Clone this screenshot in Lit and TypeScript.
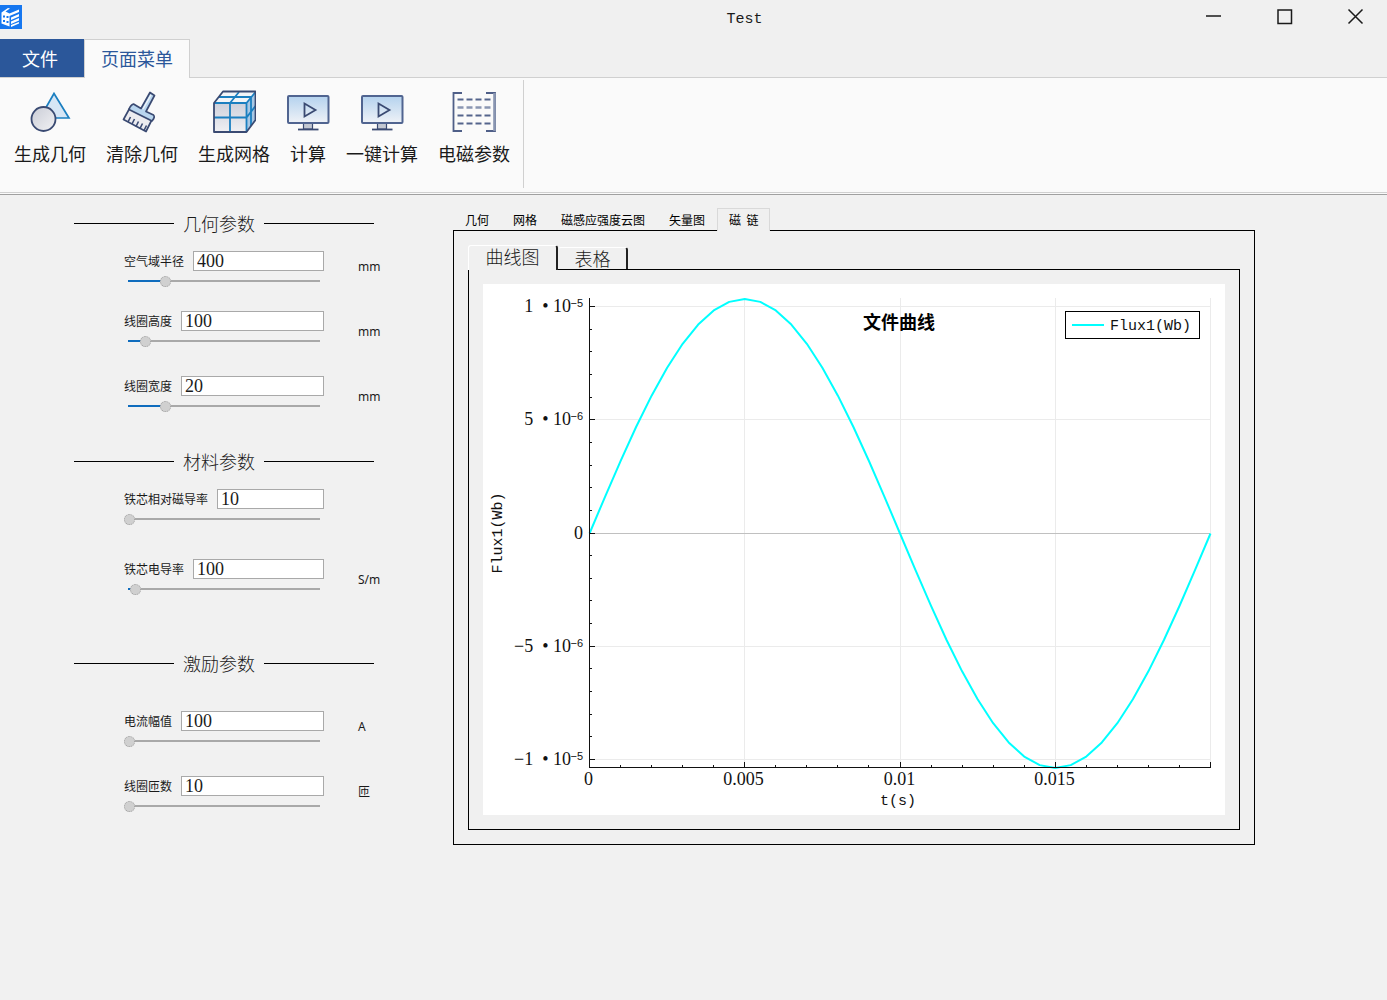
import { LitElement, html, svg, css, nothing } from "lit";
import { customElement, property, state } from "lit/decorators.js";

const NAVY = "#3a4a72";
const BLUE = "#1b7fc0";

const icons: Record<string, unknown> = {
  shapes: svg`
    <defs><linearGradient id="sg" x1="0" y1="0" x2="1" y2="1"><stop offset="0" stop-color="#c9ccd6"/><stop offset="1" stop-color="#f2f2f4"/></linearGradient></defs>
    <path d="M26 3.500 41 28H12Z" fill="#d6e6f5" stroke="${BLUE}" stroke-width="1.7"/>
    <circle cx="15.5" cy="29" r="12" fill="url(#sg)" stroke="${NAVY}" stroke-width="1.8"/>`,
  brush: svg`
    <path d="M9.500 18.500 3.500 29.500 26 41.500 32.500 28.500Z" fill="#ececf0" stroke="${NAVY}" stroke-width="1.7" stroke-linejoin="round"/>
    <path d="M8 32 10.500 27M12 34 14.500 29M16 36.500 18.500 31.500M20 38.500 22.500 33.500M24 40.500 26.500 35.500" stroke="${NAVY}" stroke-width="1.600"/>
    <path d="M13.500 14 Q10.500 15 9 19.500L32 31Q35.500 27 33.500 25L26 21.500 34.500 5.500 30 2.500 21 18.500Z" fill="#b9d6ef" stroke="${NAVY}" stroke-width="1.700" stroke-linejoin="round"/>
    <path d="M31 5 23 19" stroke="#eef3f8" stroke-width="1.500"/>`,
  cube: svg`
    <defs><linearGradient id="cg" x1="0" y1="0" x2="0" y2="1"><stop offset="0" stop-color="#cdd0db"/><stop offset="1" stop-color="#f0f0f3"/></linearGradient></defs>
    <path d="M2 13 11 1.500H43.500L34.500 13Z" fill="#f3f5f8"/>
    <path d="M34.500 13 43.500 1.500V30L34.500 42Z" fill="#a9c8e4"/>
    <path d="M2 13H34.500V42H2Z" fill="url(#cg)"/>
    <path d="M2 13H34.500V42M18 42V13L27 2M2 27.500H34.500L43.500 16M7 7H39V36M34.500 13 43.500 2" fill="none" stroke="${BLUE}" stroke-width="1.800"/>
    <path d="M2 13 11 1.500H43.500V30L34.500 42H2Z" fill="none" stroke="${NAVY}" stroke-width="1.800" stroke-linejoin="round"/>`,
  run: svg`
    <defs><linearGradient id="rg" x1="0" y1="0" x2="0" y2="1"><stop offset="0" stop-color="#b4d2ee"/><stop offset="1" stop-color="#eff2f7"/></linearGradient></defs>
    <path d="M17.500 33H26.500V39H17.500Z" fill="#c3c8d2" stroke="${NAVY}" stroke-width="1.200"/>
    <rect x="2" y="6" width="40.500" height="27" rx="1" fill="url(#rg)" stroke="#506490" stroke-width="2"/>
    <path d="M18.500 13.500V26.500L29.500 20Z" fill="none" stroke="${NAVY}" stroke-width="1.800"/>
    <path d="M12 39.500H32.500" stroke="${NAVY}" stroke-width="1.800"/>`,
  matrix: svg`
    <path d="M10 3H1.500V41H10" fill="none" stroke="#4f5f88" stroke-width="1.800"/>
    <path d="M34 3H43V41H34" fill="none" stroke="#4f5f88" stroke-width="1.800"/>
    <path d="M42.500 3V41" stroke="#8a96b2" stroke-width="2.600"/>
    <path d="M5.500 9.500H39M5.500 25.500H39M5.500 33.500H39" stroke="#54648c" stroke-width="1.800" stroke-dasharray="6 3"/>
    <path d="M5.500 17.500H39" stroke="#8a96b2" stroke-width="2.400" stroke-dasharray="6 3"/>`,
};

const ribbon = [
  ["生成几何", "shapes"],
  ["清除几何", "brush"],
  ["生成网格", "cube"],
  ["计算", "run"],
  ["一键计算", "run"],
  ["电磁参数", "matrix"],
];

@customElement("ribbon-button")
class RibbonButton extends LitElement {
  @property() label = "";
  @property() icon = "";
  static styles = css`
    :host { display: block; }
    button {
      display: flex; flex-direction: column; align-items: center; gap: 6px;
      border: 0; padding: 0; background: none; color: #1a1a1a;
      font: 18px/26px "Noto Sans CJK SC", sans-serif; white-space: nowrap;
    }
    svg { width: 44px; height: 44px; display: block; margin: 0 -4px; }
  `;
  render() {
    return html`<button type="button">
      <svg viewBox="0 0 44 44" aria-hidden="true">${icons[this.icon]}</svg>
      <span>${this.label}</span>
    </button>`;
  }
}

@customElement("param-field")
class ParamField extends LitElement {
  @property() label = "";
  @property() value = "";
  @property({ type: Number }) level = 0;
  static styles = css`
    :host { display: block; }
    .row { display: flex; align-items: center; gap: 9px; height: 20px; }
    label { font: 12px/20px "Noto Sans CJK SC", sans-serif; color: #1a1a1a; white-space: nowrap; }
    .text {
      flex: 1; min-width: 0; height: 20px; box-sizing: border-box; padding: 1px 3px 0;
      border: 1px solid #a9a9a9; background: #fff; border-radius: 0; outline: 0; color: #1a1a1a;
      font: 18px/18px "Liberation Serif", serif;
    }
    .slider {
      appearance: none; display: block; box-sizing: border-box;
      width: 100%; height: 12px; margin: 4px 0 0; outline: 0;
      background:
        linear-gradient(#0f6cbd, #0f6cbd) 4px 5px / calc(var(--level) * (100% - 10px)) 2px no-repeat,
        linear-gradient(#a9a9a9, #a9a9a9) center / calc(100% - 8px) 2px no-repeat;
    }
    .slider::-webkit-slider-thumb {
      appearance: none; width: 11px; height: 11px; border-radius: 50%;
      border: 1px dotted #a0a0a0; background: #d0d0d0; box-sizing: border-box;
    }
  `;
  render() {
    return html`
      <div class="row">
        <label for="value">${this.label}</label>
        <input id="value" class="text" type="text" .value=${this.value} />
      </div>
      <input class="slider" type="range" min="0" max="1000" aria-label=${this.label}
        .value=${String(this.level * 1000)} style="--level:${this.level}"
        @input=${(e: Event) => (this.level = Number((e.target as HTMLInputElement).value) / 1000)} />
    `;
  }
}

const range = (n: number) => Array.from({ length: n }, (_, i) => i);

@customElement("flux-chart")
class FluxChart extends LitElement {
  static styles = css`
    :host { display: block; background: #fff; }
    svg { display: block; width: 100%; height: auto; }
    text { fill: #111; font: 18px "Liberation Serif", serif; white-space: pre; }
    .sup { font: 11px "Liberation Sans", sans-serif; }
    .mono { font: 15px "Liberation Mono", monospace; }
    .title { font: bold 18px "Noto Sans CJK SC", sans-serif; fill: #000; }
    .grid { stroke: #ebebeb; }
    .zero { stroke: #c0c0c0; }
    .axis { stroke: #111; fill: none; }
    .curve { stroke: #00ffff; stroke-width: 2; fill: none; stroke-linejoin: round; }
    .legend { fill: #fff; stroke: #000; }
  `;
  render() {
    const left = 106.5, bottom = 483.5, zero = 249.5, span = 621;
    const xMajor = [0, 5, 10, 15, 20].map((i) => Math.round(106 + (i * span) / 20) + 0.5);
    const yMajor = [22.5, 135.5, 249.5, 362.5, 475.5];
    const points = range(41)
      .map((i) => `${left + (i * span) / 40},${zero - 234.5 * Math.sin((i * Math.PI) / 20)}`)
      .join(" ");
    const yLabels = [
      ["1  • 10", "−5"], ["5  • 10", "−6"], ["0", ""], ["−5  • 10", "−6"], ["−1  • 10", "−5"],
    ];
    const xLabels = ["0", "0.005", "0.01", "0.015"];
    return html`<svg viewBox="0 0 742 531" role="img" aria-label="文件曲线">
      ${xMajor.slice(1).map((x) => svg`<path class="grid" d="M${x} 14V484"/>`)}
      ${yMajor.map((y) => svg`<path class=${y === zero ? "zero" : "grid"} d="M107 ${y}H727"/>`)}
      <text class="title" x="416" y="45" text-anchor="middle">文件曲线</text>
      <polyline class="curve" points=${points}></polyline>
      <path class="axis" d="M${left} 14V${bottom}H728"></path>
      ${range(21).map((i) => {
        const x = Math.round(106 + (i * span) / 20) + 0.5;
        return svg`<path class="axis" d="M${x} 484V${i % 5 ? 481 : 478}"/>`;
      })}
      ${range(21).map((i) => {
        const y = Math.round(22 + i * 22.65) + 0.5;
        return svg`<path class="axis" d="M106 ${y}H${i % 5 ? 109 : 112}"/>`;
      })}
      ${yLabels.map(([base, sup], i) => svg`
        <text x=${sup ? 88 : 100} y=${yMajor[i] + 5.5} text-anchor="end">${base}</text>
        ${sup ? svg`<text class="sup" x="100" y=${yMajor[i] + 0.5} text-anchor="end">${sup}</text>` : nothing}`)}
      ${xLabels.map((t, i) => svg`<text x=${xMajor[i] - 1} y="501" text-anchor="middle">${t}</text>`)}
      <text class="mono" x="415" y="521" text-anchor="middle">t(s)</text>
      <text class="mono" transform="translate(19 249) rotate(-90)" text-anchor="middle">Flux1(Wb)</text>
      <rect class="legend" x="582.5" y="27.5" width="134" height="27"></rect>
      <path class="curve" d="M589 41H621"></path>
      <text class="mono" x="627" y="46">Flux1(Wb)</text>
    </svg>`;
  }
}

@customElement("app-root")
class AppRoot extends LitElement {
  @state() private view = 4;
  @state() private page = 0;

  static styles = css`
    :host {
      display: flex; flex-direction: column; min-height: 100vh; background: #f1f1f1;
      color: #1a1a1a; font-family: "Noto Sans CJK SC", sans-serif;
    }
    button { font-family: inherit; margin: 0; }
    .titlebar { display: flex; height: 39px; background: #f0f0f0; }
    .logo { width: 22px; height: 24px; margin-top: 5px; flex: none; }
    .caption { flex: 1; padding-left: 285px; text-align: center; font: 15px/39px "Liberation Mono", monospace; }
    .window { display: flex; gap: 8px; }
    .window button { width: 63px; height: 33px; border: 0; padding: 0; background: none; display: grid; place-items: center; }
    .window svg { width: 17px; height: 17px; fill: none; stroke: #1a1a1a; }
    .menu { display: flex; height: 38px; background: #f0f0f0; }
    .menu button { border: 0; font-size: 18px; line-height: 36px; box-sizing: border-box; white-space: nowrap; }
    .menu .file { width: 84px; padding: 0 4px 0 0; background: #2b579a; color: #fff; }
    .menu .tab {
      width: 106px; height: 39px; padding: 0 0 2px; margin-bottom: -1px; position: relative;
      border: 1px solid #d0d0d0; border-bottom: 0; background: #fafafa; color: #2b579a;
    }
    .ribbon { border-bottom: 1px solid #a0a0a0; padding-bottom: 1px; background: #fafafa; }
    .tools { display: flex; border: solid #d0d0d0; border-width: 1px 0; height: 114px; }
    .group { display: flex; gap: 20px; padding: 10px 13px 0 14px; margin: 2px 0 4px; border-right: 1px solid #d0d0d0; }
    main { display: grid; grid-template-columns: 453px minmax(0, 1fr); padding: 13px 132px 0 0; }
    .params { padding: 2px 0 0 74px; }
    h2 {
      display: grid; grid-template-columns: 100px auto 110px; gap: 9px; align-items: center;
      width: 300px; margin: 0; font-size: 18px; line-height: 26px; font-weight: 300; white-space: nowrap;
    }
    h2::before, h2::after { content: ""; height: 1px; background: #000; }
    .group-body { display: grid; grid-template-columns: 200px auto; column-gap: 34px; justify-content: start; padding: 15px 0 0 50px; }
    .geometry { margin-bottom: 36px; }
    .material { margin-bottom: 55px; }
    .excite .group-body { padding-top: 35px; }
    .fields { display: flex; flex-direction: column; gap: 29px; }
    .geometry .fields { gap: 24px; }
    .geometry param-field:last-child { margin-top: 5px; }
    .material .fields { gap: 34px; }
    .units { display: flex; flex-direction: column; gap: 45px; padding-top: 6px; font: 12px/20px "Noto Sans", "Noto Sans CJK SC", sans-serif; }
    .material .units { padding-top: 81px; }
    .views { display: flex; height: 22px; }
    .views button {
      height: 23px; padding: 0 11px; border: 1px solid transparent; border-bottom: 0; background: none;
      font-size: 12px; line-height: 22px; color: #000; white-space: pre;
    }
    .views .on { border-color: #d9d9d9; background: #f0f0f0; position: relative; margin-bottom: -1px; }
    .pane { border: 1px solid #000; background: #f0f0f0; padding: 14px; }
    .pages { display: flex; align-items: flex-end; height: 24px; }
    .pages button {
      font-size: 18px; font-weight: 300; line-height: 18px; box-sizing: border-box; padding: 0 0 2px; color: #1a1a1a;
      border: solid; border-width: 1px 2px 0 1px; border-color: #fff #222 #fff #f0f0f0; background: #f0f0f0;
      width: 70px; height: 22px; border-radius: 3px 3px 0 0;
    }
    .pages .on { width: 90px; height: 25px; margin-bottom: -1px; padding-bottom: 4px; border-left-color: #fff; position: relative; }
    .page { border: 1px solid #000; padding: 14px; }
  `;

  private section(cls: string, title: string, fields: [string, string, number][], units: string[]) {
    return html`<section class=${cls}>
      <h2>${title}</h2>
      <div class="group-body">
        <div class="fields">
          ${fields.map(([l, v, s]) => html`<param-field label=${l} value=${v} level=${s}></param-field>`)}
        </div>
        <div class="units">${units.map((u) => html`<span>${u}</span>`)}</div>
      </div>
    </section>`;
  }

  render() {
    return html`
      <header class="titlebar">
        <svg class="logo" viewBox="0 0 22 24" aria-hidden="true">
          <path d="M0 0H22V24H0Z" fill="#1677f0"/>
          <path d="M1.500 7.500 8 3 10 3.500 5.500 6.500 9.500 8.500 19 4.500 19 7 9.500 11V21.500L1.500 18.500Z" fill="#fff"/>
          <path d="M11 12.500 19 9V11.500L11 15ZM11 16.500 19 13V15.500L11 19ZM11 20 19 17V18.500L11 22Z" fill="#fff"/>
          <path d="M3 10.500H5V12.500H3ZM6.500 11H8.500V13H6.500ZM3 15H5V17H3ZM6.500 16H8.500V18H6.500Z" fill="#1677f0"/>
        </svg>
        <div class="caption">Test</div>
        <div class="window">
          <button type="button" aria-label="最小化"><svg viewBox="0 0 17 17"><path d="M1 8H16" stroke-width="1.5"/></svg></button>
          <button type="button" aria-label="最大化"><svg viewBox="0 0 17 17"><path d="M2 2H15.500V15.500H2Z" stroke-width="1.500"/></svg></button>
          <button type="button" aria-label="关闭"><svg viewBox="0 0 17 17"><path d="M1.500 1.500 15.500 15.500M15.500 1.500 1.500 15.500" stroke-width="1.500"/></svg></button>
        </div>
      </header>
      <nav class="menu">
        <button type="button" class="file">文件</button>
        <button type="button" class="tab">页面菜单</button>
      </nav>
      <div class="ribbon">
        <div class="tools">
          <div class="group">
            ${ribbon.map(([l, i]) => html`<ribbon-button label=${l} icon=${i}></ribbon-button>`)}
          </div>
        </div>
      </div>
      <main>
        <div class="params">
          ${this.section("geometry", "几何参数",
            [["空气域半径", "400", 0.19], ["线圈高度", "100", 0.085], ["线圈宽度", "20", 0.19]],
            ["mm", "mm", "mm"])}
          ${this.section("material", "材料参数",
            [["铁芯相对磁导率", "10", 0], ["铁芯电导率", "100", 0.032]], ["S/m"])}
          ${this.section("excite", "激励参数",
            [["电流幅值", "100", 0], ["线圈匝数", "10", 0]], ["A", "匝"])}
        </div>
        <div>
          <div class="views" role="tablist">
            ${["几何", "网格", "磁感应强度云图", "矢量图", "磁  链"].map((t, i) => html`<button type="button" role="tab"
              class=${i === this.view ? "on" : ""} aria-selected=${i === this.view}
              @click=${() => (this.view = i)}>${t}</button>`)}
          </div>
          <div class="pane">
            <div class="pages" role="tablist">
              ${["曲线图", "表格"].map((t, i) => html`<button type="button" role="tab"
                class=${i === this.page ? "on" : ""} aria-selected=${i === this.page}
                @click=${() => (this.page = i)}>${t}</button>`)}
            </div>
            <div class="page"><flux-chart></flux-chart></div>
          </div>
        </div>
      </main>
    `;
  }
}
